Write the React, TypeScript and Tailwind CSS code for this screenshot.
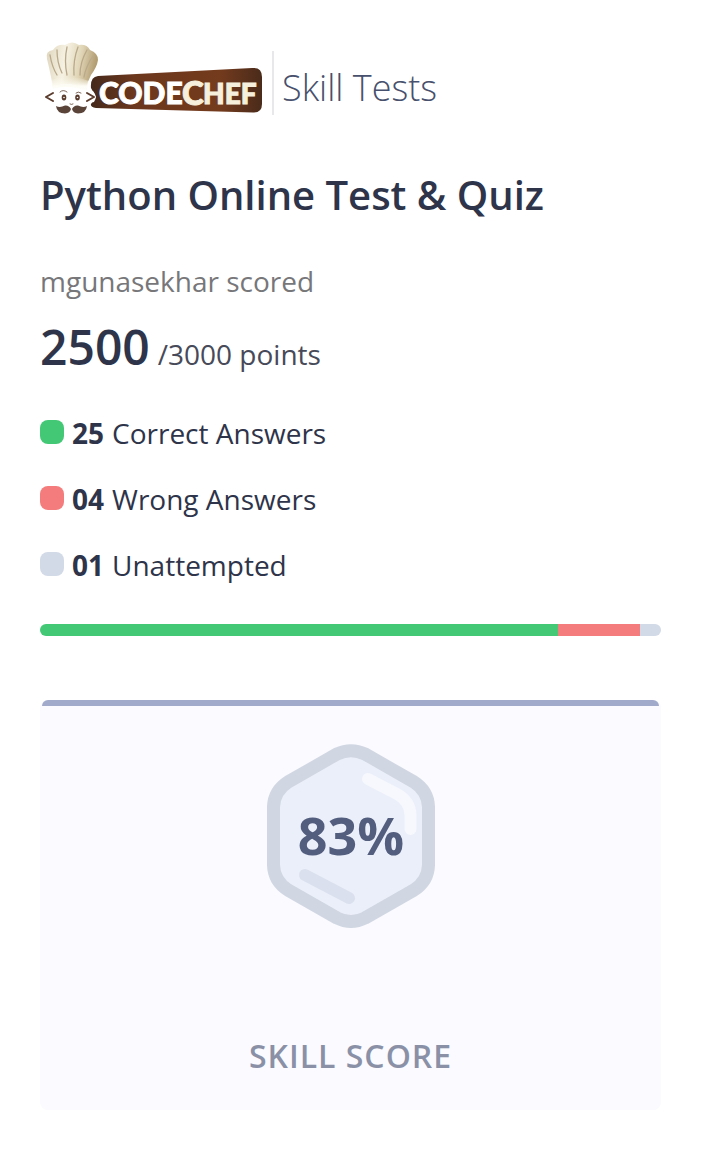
const results = [
  { count: "25", label: "Correct Answers", color: "bg-[#43c875]", share: 25 },
  { count: "04", label: "Wrong Answers", color: "bg-[#f47c7c]", share: 4 },
  { count: "01", label: "Unattempted", color: "bg-[#d2d9e7]", share: 1 },
];

function Logo() {
  return (
    <svg className="h-[76px] w-[224px] shrink-0" viewBox="40 40 224 76" role="img" aria-label="CodeChef">
      <defs>
        <linearGradient id="wood" x1="0" x2="1" y1="0" y2="0">
          <stop offset="0" stopColor="#45291b" />
          <stop offset="0.25" stopColor="#6b371d" />
          <stop offset="0.75" stopColor="#743b1d" />
          <stop offset="1" stopColor="#4a2b1a" />
        </linearGradient>
        <linearGradient id="hat" x1="0" x2="1" y1="0" y2="0.15">
          <stop offset="0" stopColor="#ded5bd" />
          <stop offset="0.4" stopColor="#f6f2e3" />
          <stop offset="0.7" stopColor="#e0d5b6" />
          <stop offset="1" stopColor="#b39d72" />
        </linearGradient>
        <linearGradient id="band" x1="0" x2="0" y1="0" y2="1">
          <stop offset="0" stopColor="#fbf8ea" stopOpacity="0" />
          <stop offset="0.6" stopColor="#fdfcf4" />
          <stop offset="1" stopColor="#fff" />
        </linearGradient>
      </defs>
      <path d="M98 76 L252 68 Q262 67 262 77 V104 Q262 113 253 112.500 L96 108 Q90 107 91 104 L96 97 L91 88 Q90 77 98 76Z" fill="url(#wood)" />
      <path d="M53 87 Q50 71 47 59 Q45 51 53 50 Q57 44 65 45 Q72 40 79 45 Q87 44 90 50 Q98 53 98 60 Q97 67 91 75 Q87 82 86 90 Q69 80 53 87Z" fill="url(#hat)" />
      <g fill="none" stroke="#b9a98a" strokeWidth="1.3" strokeLinecap="round">
        <path d="M50 55 Q52 67 57 75" />
        <path d="M57 50 Q57 63 62 73" />
        <path d="M67 47 Q64 61 67 75" />
        <path d="M78 47 Q73 60 74 75" />
        <path d="M87 50 Q80 62 80 75" />
        <path d="M93 56 Q86 66 84 77" />
      </g>
      <path d="M51 80 Q69 73 89 81 L86 92 Q69 85 53 89Z" fill="url(#band)" />
      <path d="M53 89 Q69 84 86 91 L93 91 Q98 97 94 102 L85 104 H54Z" fill="#fff" />
      <g fill="none" stroke="#5a3b2c" strokeWidth="2" strokeLinecap="round" strokeLinejoin="round">
        <path d="M53 93 L46 97 L53 101" />
        <path d="M87 93 L94 97 L87 101" />
        <path d="M60 92 Q63 89 67 92 M76 93 Q78 91 81 93 M70 104 Q71.500 105 73 104" strokeWidth="0.8" />
      </g>
      <ellipse cx="64" cy="97.500" rx="2.300" ry="2.900" fill="#5a3b2c" />
      <ellipse cx="77.500" cy="97.500" rx="2.300" ry="2.900" fill="#5a3b2c" />
      <circle cx="64" cy="97.500" r="0.8" fill="#fff" />
      <circle cx="77.500" cy="97.500" r="0.8" fill="#fff" />
      <path d="M71 109 Q69 105 65 105.500 Q60 108 56 106 Q57 113.500 65 113.500 Q70 113 71 109Z M72 109 Q74 105 78 105.500 Q83 108 87 106 Q86 113.500 78 113.500 Q73 113 72 109Z" fill="#5a4338" />
      <g fontFamily="Lato, 'Liberation Sans', sans-serif" fontWeight="900">
        <text x="99" y="104" fontSize="30" fill="#fff" stroke="#fff" strokeWidth="1">CODE</text>
        <text x="182" y="105" fontSize="33" fill="#f5efdc" stroke="#f5efdc" strokeWidth="1">
          C<tspan x="203" y="104" fontSize="28">HEF</tspan>
        </text>
      </g>
    </svg>
  );
}

function ScoreBadge({ value }: { value: string }) {
  return (
    <svg className="h-[186px] w-[170px]" viewBox="266 743 170 186" role="img" aria-label={`Skill score ${value}`}>
      <path d="M337 754 Q351 747.500 365 754 L414 782 Q428 791 428.500 807 V865 Q428 881 414 890 L365 918 Q351 925 337 918 L288 890 Q274 881 273.500 865 V807 Q274 791 288 782Z" fill="#ebeff9" stroke="#d0d6e2" strokeWidth="13" strokeLinejoin="round" />
      <path d="M368 779 L397 794 Q410 801 410.500 815 V829" fill="none" stroke="#f6f8fd" strokeWidth="12" strokeLinecap="round" strokeLinejoin="round" />
      <path d="M305 875 L349 898" stroke="#dbe0ee" strokeWidth="12" strokeLinecap="round" />
      <text x="351" y="855" textAnchor="middle" fontFamily="'Open Sans', sans-serif" fontWeight="700" fontSize="52" fill="#535e7f">{value}</text>
    </svg>
  );
}

export default function App() {
  return (
    <main className="min-h-screen bg-white py-10 pr-[41px] pl-10 font-['Open_Sans',sans-serif] text-[#2e3449]">
      <header className="flex items-end">
        <Logo />
        <div className="mb-px ml-2 border-l-2 border-[#e8e8ea] pt-2.5 pl-2 text-4xl leading-[54px] font-light text-[#47506c]">
          Skill Tests
        </div>
      </header>
      <h1 className="mt-12 text-[40px] leading-[62px] font-semibold">Python Online Test &amp; Quiz</h1>
      <p className="mt-[35px] text-[28px] leading-10 text-[#77777a]">mgunasekhar scored</p>
      <p className="mt-2 flex items-baseline gap-2">
        <span className="text-5xl leading-[76px] font-semibold">2500</span>
        <span className="text-[28px] text-[#474a58]">/3000 points</span>
      </p>
      <ul className="mt-[27px] flex flex-col gap-6">
        {results.map((r) => (
          <li key={r.label} className="flex gap-2 text-[28px] leading-[42px]">
            <span className={`mt-2 size-6 rounded-lg ${r.color}`} />
            <b className="font-bold">{r.count}</b>
            <span>{r.label}</span>
          </li>
        ))}
      </ul>
      <div className="mt-[38px] flex h-3 overflow-hidden rounded-full">
        {results.map((r) => (
          <div key={r.label} className={r.color} style={{ flexGrow: r.share }} />
        ))}
      </div>
      <section className="mt-16 flex flex-col items-center rounded-lg bg-[#fafaff] px-0.5 pb-7">
        <div className="h-1.5 w-full rounded-t-md bg-[#a1aacb]" />
        <div className="mt-[37px]">
          <ScoreBadge value="83%" />
        </div>
        <h2 className="mt-[101px] text-[32px] leading-[52px] font-semibold tracking-[1px] text-[#8a91a7]">SKILL SCORE</h2>
      </section>
    </main>
  );
}
